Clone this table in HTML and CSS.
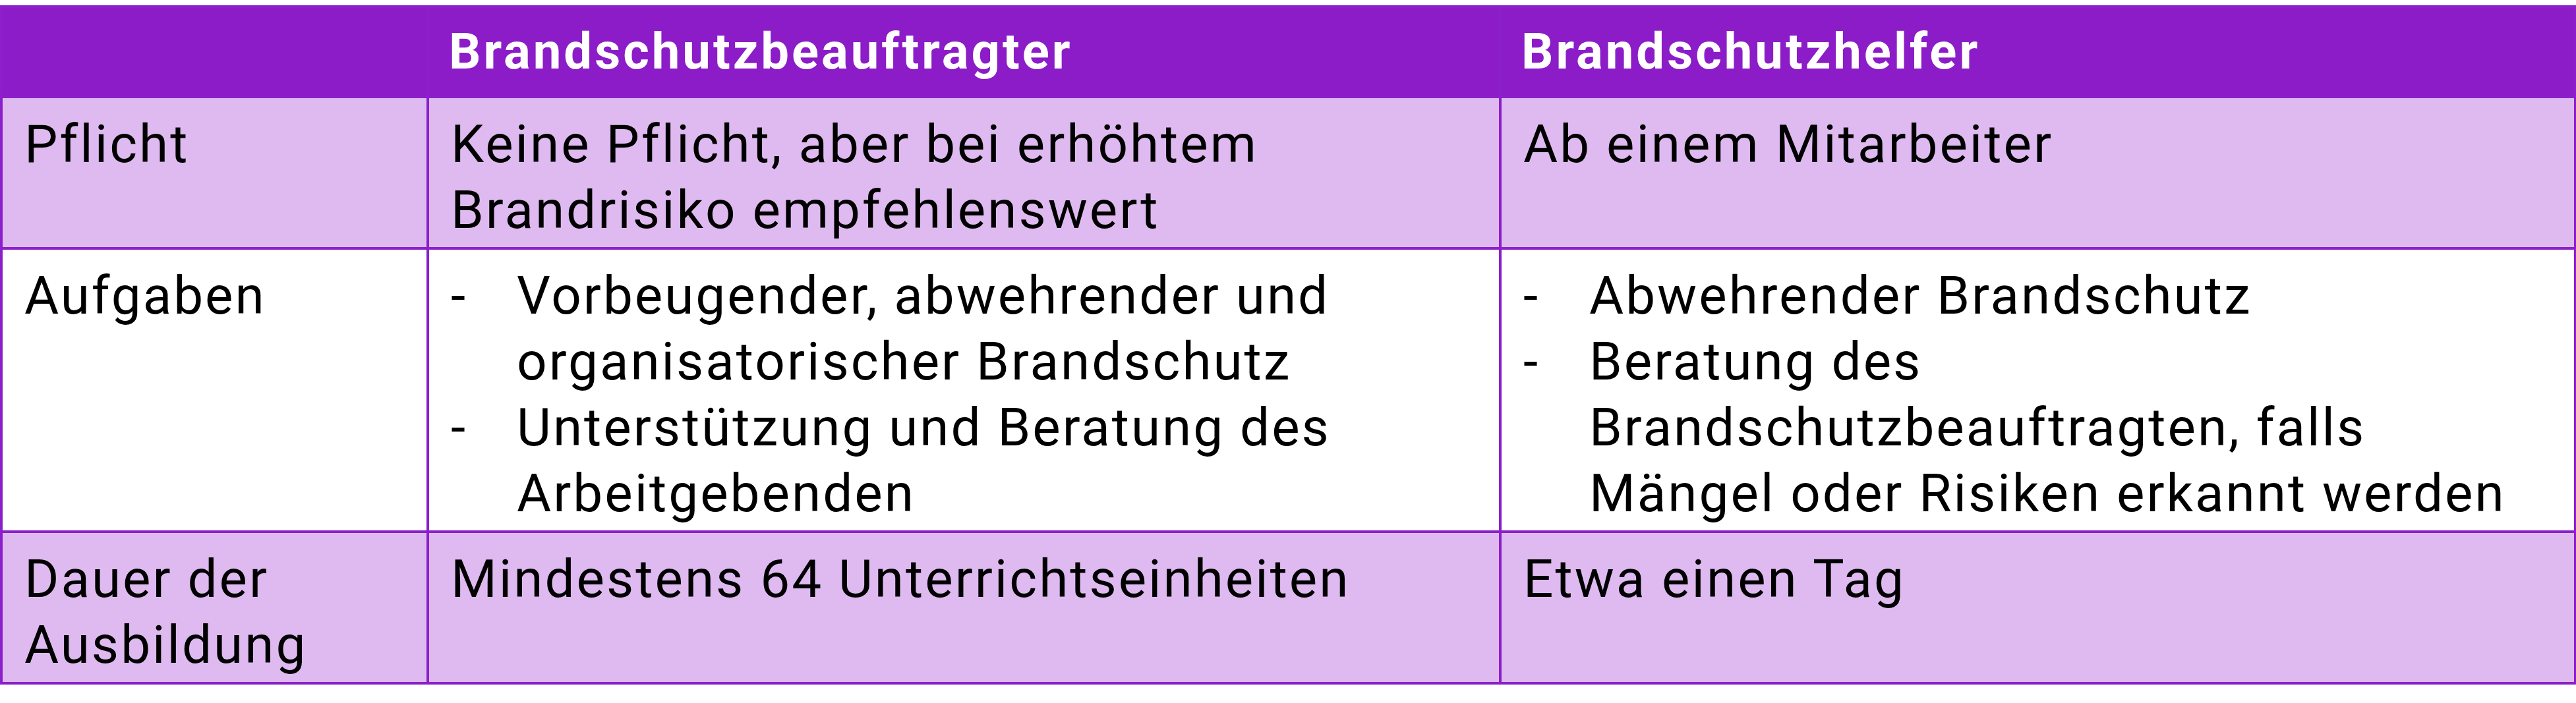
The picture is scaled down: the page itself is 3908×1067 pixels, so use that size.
FILE: index.html
```html
<!DOCTYPE html>
<html lang="de">
<head>
<meta charset="utf-8">
<title>Brandschutz</title>
<link rel="stylesheet" href="styles.css">
</head>
<body>
<table class="cmp">
  <colgroup>
    <col class="c1">
    <col class="c2">
    <col class="c3">
  </colgroup>
  <thead>
    <tr class="head">
      <th></th>
      <th>Brandschutzbeauftragter</th>
      <th>Brandschutzhelfer</th>
    </tr>
  </thead>
  <tbody>
    <tr class="tint">
      <td>Pflicht</td>
      <td>Keine Pflicht, aber bei erhöhtem<br>Brandrisiko empfehlenswert</td>
      <td>Ab einem Mitarbeiter</td>
    </tr>
    <tr class="plain">
      <td>Aufgaben</td>
      <td>
        <ul class="dash-list">
          <li><span class="dash">-</span><span>Vorbeugender, abwehrender und organisatorischer Brandschutz</span></li>
          <li><span class="dash">-</span><span>Unterstützung und Beratung des Arbeitgebenden</span></li>
        </ul>
      </td>
      <td>
        <ul class="dash-list">
          <li><span class="dash">-</span><span>Abwehrender Brandschutz</span></li>
          <li><span class="dash">-</span><span>Beratung des Brandschutzbeauftragten, falls Mängel oder Risiken erkannt werden</span></li>
        </ul>
      </td>
    </tr>
    <tr class="tint">
      <td>Dauer der<br>Ausbildung</td>
      <td>Mindestens 64 Unterrichtseinheiten</td>
      <td>Etwa einen Tag</td>
    </tr>
  </tbody>
</table>
</body>
</html>
```
FILE: styles.css
```css
html, body {
  margin: 0;
  padding: 0;
  background: #ffffff;
}
body {
  padding-top: 8px;
  font-family: Roboto, "Liberation Sans", Arial, sans-serif;
  color: #000000;
}
.cmp {
  border-collapse: collapse;
  table-layout: fixed;
  width: 3905px;
}
.c1 { width: 647px; }
.c2 { width: 1627px; }
.c3 { width: 1631px; }

.cmp th, .cmp td {
  border: 4px solid #8b1fca;
  text-align: left;
  vertical-align: top;
}
.head th {
  background: #8c1cc8;
  color: #ffffff;
  font-weight: 700;
  font-size: 76px;
  line-height: 100px;
  letter-spacing: 4px;
  padding: 16px 36px 17px 30px;
}
.cmp td {
  font-size: 80px;
  line-height: 100px;
  letter-spacing: 3px;
  padding: 20px 36px 6px 33px;
}
.tint td { background: #dfbaf0; }
.plain td { background: #ffffff; }

.dash-list {
  list-style: none;
  margin: 0;
  padding: 0;
}
.dash-list li {
  display: flex;
}
.dash {
  flex: 0 0 100px;
}
```
